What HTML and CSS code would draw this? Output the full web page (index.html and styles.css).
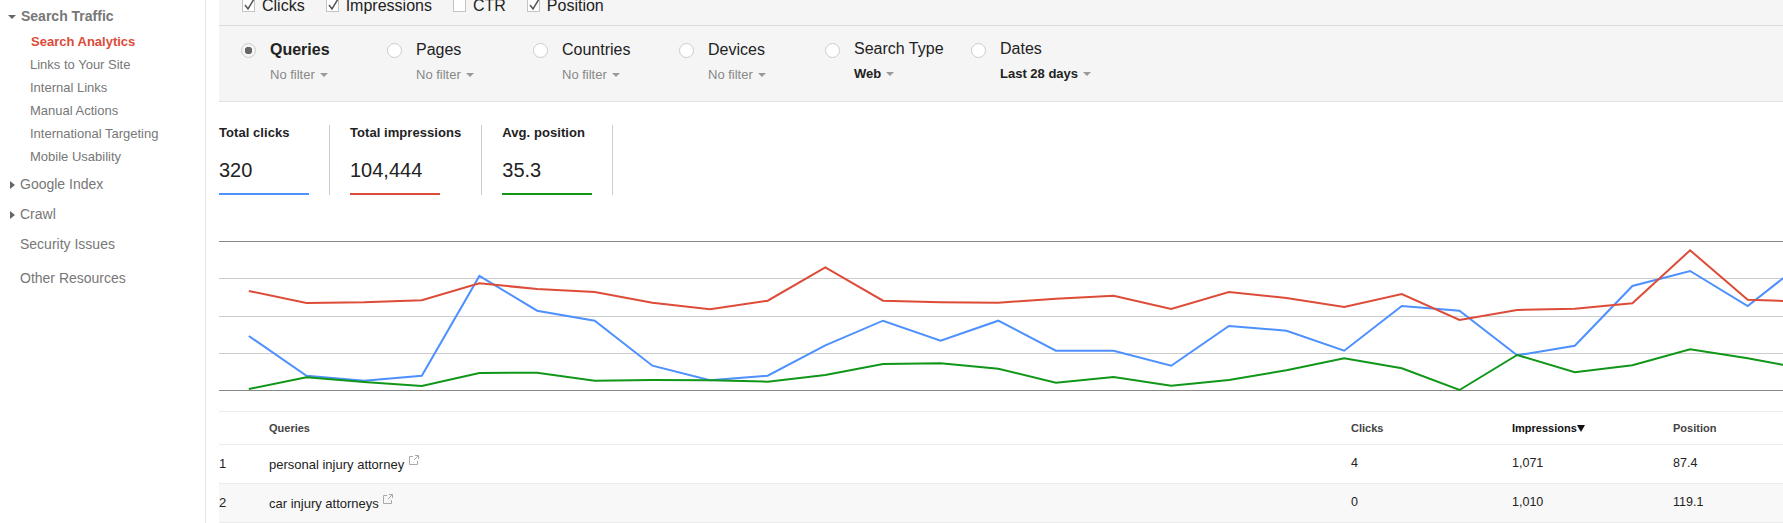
FILE: index.html
```html
<!DOCTYPE html>
<html lang="en">
  <head>
    <meta charset="UTF-8" />
    <meta name="viewport" content="width=device-width, initial-scale=1.0" />
    <title>Search Analytics</title>
    <link rel="stylesheet" href="styles.css">
  </head>
  <body>
    <div class="page">
      <div class="side">
        <div class="side-head"><i class="arrow-down"></i>Search Traffic</div>
        <ul class="side-sub">
          <li class="current">Search Analytics</li>
          <li>Links to Your Site</li>
          <li>Internal Links</li>
          <li>Manual Actions</li>
          <li>International Targeting</li>
          <li>Mobile Usability</li>
        </ul>
        <div class="side-link"><i class="arrow-right"></i>Google Index</div>
        <div class="side-link"><i class="arrow-right"></i>Crawl</div>
        <div class="side-link plain">Security Issues</div>
        <div class="side-link plain other">Other Resources</div>
      </div>

      <div class="main">
        <div class="checks">
          <label class="check">
            <span class="box"><svg width="15" height="15" viewBox="0 0 15 15"><path d="M3 7l3 4 6-10" /></svg></span>Clicks
          </label>
          <label class="check">
            <span class="box"><svg width="15" height="15" viewBox="0 0 15 15"><path d="M3 7l3 4 6-10" /></svg></span>Impressions
          </label>
          <label class="check">
            <span class="box"></span>CTR
          </label>
          <label class="check">
            <span class="box"><svg width="15" height="15" viewBox="0 0 15 15"><path d="M3 7l3 4 6-10" /></svg></span>Position
          </label>
        </div>

        <div class="filters">
          <div class="filter">
            <span class="radio selected"></span>
            <div>
              <div class="filter-name bold">Queries</div>
              <div class="filter-val">No filter<i class="caret"></i></div>
            </div>
          </div>
          <div class="filter">
            <span class="radio"></span>
            <div>
              <div class="filter-name">Pages</div>
              <div class="filter-val">No filter<i class="caret"></i></div>
            </div>
          </div>
          <div class="filter">
            <span class="radio"></span>
            <div>
              <div class="filter-name">Countries</div>
              <div class="filter-val">No filter<i class="caret"></i></div>
            </div>
          </div>
          <div class="filter">
            <span class="radio"></span>
            <div>
              <div class="filter-name">Devices</div>
              <div class="filter-val">No filter<i class="caret"></i></div>
            </div>
          </div>
          <div class="filter raised">
            <span class="radio"></span>
            <div>
              <div class="filter-name">Search Type</div>
              <div class="filter-val set">Web<i class="caret"></i></div>
            </div>
          </div>
          <div class="filter raised">
            <span class="radio"></span>
            <div>
              <div class="filter-name">Dates</div>
              <div class="filter-val set">Last 28 days<i class="caret"></i></div>
            </div>
          </div>
        </div>

        <div class="cards">
          <div class="card">
            <div class="card-title">Total clicks</div>
            <div class="card-num">320</div>
            <div class="card-bar blue"></div>
          </div>
          <div class="card">
            <div class="card-title">Total impressions</div>
            <div class="card-num">104,444</div>
            <div class="card-bar red"></div>
          </div>
          <div class="card">
            <div class="card-title">Avg. position</div>
            <div class="card-num">35.3</div>
            <div class="card-bar green"></div>
          </div>
        </div>

        <!-- viewBox uses page coordinates -->
        <svg class="chart" width="1564" height="180" viewBox="219 230 1564 180">
          <path class="axis" d="M219 241.5H1783M219 390.5H1783" />
          <path class="grid" d="M219 278.5H1783M219 316.5H1783M219 353.5H1783" />
          <polyline class="line-blue" points="248.8,336 306.5,375.7 364.1,380.7 421.8,375.7 479.4,276 537.1,310.7 594.7,320.7 652.4,365.7 710,380.3 767.7,375.7 825.3,345.3 883,320.7 940.6,340.7 998.3,320.7 1055.9,350.7 1113.6,350.7 1171.2,365.7 1228.9,326 1286.5,330.7 1344.2,350.7 1401.8,306 1459.5,310.7 1517.1,355.3 1574.8,345.7 1632.4,286 1690.1,271 1747.7,306 1805.4,260.7" />
          <polyline class="line-red" points="248.8,291 306.5,303 364.1,302.3 421.8,300.3 479.4,283.3 537.1,289 594.7,292 652.4,302.7 710,309.3 767.7,300.7 825.3,267.3 883,300.7 940.6,302.3 998.3,302.7 1055.9,298.7 1113.6,295.7 1171.2,309 1228.9,292 1286.5,298 1344.2,307 1401.8,294 1459.5,320 1517.1,310 1574.8,308.7 1632.4,303.3 1690.1,250.3 1747.7,299.7 1805.4,301.7" />
          <polyline class="line-green" points="248.8,389 306.5,377.3 364.1,382 421.8,386 479.4,373 537.1,372.7 594.7,380.7 652.4,380 710,380.3 767.7,381.7 825.3,375 883,364 940.6,363.3 998.3,368.7 1055.9,382.7 1113.6,377 1171.2,385.7 1228.9,380 1286.5,370.3 1344.2,358.3 1401.8,368.3 1459.5,390 1517.1,355 1574.8,372.3 1632.4,365.3 1690.1,349.3 1747.7,358.3 1805.4,369" />
        </svg>

        <table class="rows">
          <colgroup>
            <col class="col-num" />
            <col class="col-query" />
            <col class="col-stat" />
            <col class="col-stat" />
            <col class="col-pos" />
          </colgroup>
          <thead>
            <tr>
              <th></th>
              <th>Queries</th>
              <th>Clicks</th>
              <th class="sorted">Impressions<i class="sort-arrow"></i></th>
              <th>Position</th>
            </tr>
          </thead>
          <tbody>
            <tr>
              <td class="query">1</td>
              <td class="query">personal injury attorney
                <svg class="ext" width="10" height="10" viewBox="0 0 10 10"><path d="M4 1.5H.5v8h8V6M5 5L9.500.5M6 .5h3.500V4" /></svg>
              </td>
              <td>4</td>
              <td>1,071</td>
              <td>87.4</td>
            </tr>
            <tr class="alt">
              <td class="query">2</td>
              <td class="query">car injury attorneys
                <svg class="ext" width="10" height="10" viewBox="0 0 10 10"><path d="M4 1.5H.5v8h8V6M5 5L9.500.5M6 .5h3.500V4" /></svg>
              </td>
              <td>0</td>
              <td>1,010</td>
              <td>119.1</td>
            </tr>
          </tbody>
        </table>
      </div>
    </div>
  </body>
</html>
```

FILE: styles.css
```css
* {
  margin: 0;
  padding: 0;
  box-sizing: border-box;
}

body {
  font-family: "Liberation Sans", Arial, sans-serif;
  color: #222;
  background: #fff;
  overflow: hidden;
}

ul {
  list-style: none;
}

.page {
  display: flex;
  height: 100vh;
}

/* sidebar */
.side {
  width: 206px;
  flex: none;
  padding-top: 5px;
  border-right: 1px solid #e5e5e5;
  font-size: 13px;
  line-height: 23px;
  color: #777;
}

.side-head {
  display: flex;
  align-items: center;
  padding-left: 8px;
  font-size: 14px;
  font-weight: bold;
}

.arrow-down {
  width: 0;
  height: 0;
  margin-right: 5px;
  border-top: 4px solid #666;
  border-left: 4px solid transparent;
  border-right: 4px solid transparent;
}

.side-sub {
  margin: 2px 0 -2px;
  padding-left: 30px;
}

.side-sub .current {
  padding-left: 1px;
  color: #dd4b39;
  font-weight: bold;
}

.side-link {
  display: flex;
  align-items: center;
  margin-top: 7px;
  padding-left: 10px;
  font-size: 14px;
}

.side-link.plain {
  padding-left: 20px;
}

.side-link.other {
  margin-top: 11px;
}

.arrow-right {
  width: 0;
  height: 0;
  margin-right: 5px;
  border-left: 5px solid #666;
  border-top: 4px solid transparent;
  border-bottom: 4px solid transparent;
}

/* main column */
.main {
  flex: 1;
  min-width: 0;
  margin-left: 13px;
}

.checks {
  display: flex;
  align-items: flex-end;
  gap: 21px;
  height: 26px;
  padding: 0 0 9px 23px;
  background: #f5f5f5;
  border-bottom: 1px solid #d9d9d9;
}

.check {
  display: flex;
  align-items: flex-end;
  gap: 7px;
  font-size: 16px;
  line-height: 20px;
}

.box {
  display: block;
  position: relative;
  width: 13px;
  height: 13px;
  margin-bottom: 4px;
  background: #fff;
  border: 1px solid #c4c4c4;
}

.box svg {
  position: absolute;
  left: -1px;
  top: -2px;
}

.box path {
  fill: none;
  stroke: #555;
  stroke-width: 1.5;
}

.filters {
  display: grid;
  grid-template-columns: repeat(6, 146px);
  height: 76px;
  padding: 14px 0 0 22px;
  background: #f5f5f5;
  border-bottom: 1px solid #e0e0e0;
}

.filter {
  display: flex;
  gap: 14px;
}

.radio {
  width: 15px;
  height: 15px;
  margin-top: 3px;
  flex: none;
  border: 1px solid #ccc;
  border-radius: 50%;
  background: #fff;
}

.radio.selected {
  background: radial-gradient(circle, #666 3.5px, #f5f5f5 4px);
}

.filter-name {
  font-size: 16px;
  line-height: 20px;
}

.filter-name.bold {
  font-weight: bold;
}

.filter-val {
  margin-top: 6px;
  font-size: 13px;
  line-height: 18px;
  color: #888;
}

.raised .filter-name {
  margin-top: -1px;
}

.filter-val.set {
  font-weight: bold;
  color: #222;
}

.caret {
  display: inline-block;
  width: 0;
  height: 0;
  margin-left: 5px;
  vertical-align: 2px;
  border-top: 4px solid #999;
  border-left: 4px solid transparent;
  border-right: 4px solid transparent;
}

/* totals */
.cards {
  display: flex;
  margin-top: 23px;
}

.card {
  min-width: 111px;
  margin-right: 20px;
  padding-right: 20px;
  border-right: 1px solid #ccc;
}

.card-title {
  font-size: 13px;
  font-weight: bold;
  line-height: 15px;
  letter-spacing: 0.06px;
  white-space: nowrap;
}

.card-num {
  margin-top: 18px;
  font-size: 20px;
  line-height: 24px;
}

.card-bar {
  width: 90px;
  height: 2px;
  margin-top: 11px;
}

.blue {
  background: #4d90fe;
}

.red {
  background: #dd4b39;
}

.green {
  background: #109618;
}

/* chart */
.chart {
  display: block;
  margin-top: 35px;
}

.axis {
  stroke: #888;
  fill: none;
}

.grid {
  stroke: #ccc;
  fill: none;
}

.chart polyline {
  fill: none;
  stroke-width: 2;
}

.line-blue {
  stroke: #4d90fe;
}

.line-red {
  stroke: #dd4b39;
}

.line-green {
  stroke: #109618;
}

/* table */
.rows {
  width: 100%;
  margin-top: 1px;
  table-layout: fixed;
  border-collapse: separate;
  border-spacing: 0;
}

.col-num {
  width: 50px;
}

.col-stat {
  width: 161px;
}

.col-pos {
  width: 110px;
}

.rows th {
  height: 34px;
  padding: 0;
  font-size: 11px;
  font-weight: bold;
  text-align: left;
  color: #444;
  border-top: 1px solid #ebebeb;
  border-bottom: 1px solid #ebebeb;
}

.rows th.sorted {
  color: #111;
}

.sort-arrow {
  display: inline-block;
  width: 0;
  height: 0;
  border-top: 7px solid #111;
  border-left: 4px solid transparent;
  border-right: 4px solid transparent;
}

.rows td {
  height: 39px;
  padding: 0 0 2px;
  font-size: 12.5px;
  border-bottom: 1px solid #ebebeb;
}

.rows td.query {
  font-size: 13px;
}

.alt td {
  background: #f8f8f8;
}

.ext {
  margin-left: 1px;
  vertical-align: 4px;
}

.ext path {
  fill: none;
  stroke: #aaa;
}
```
